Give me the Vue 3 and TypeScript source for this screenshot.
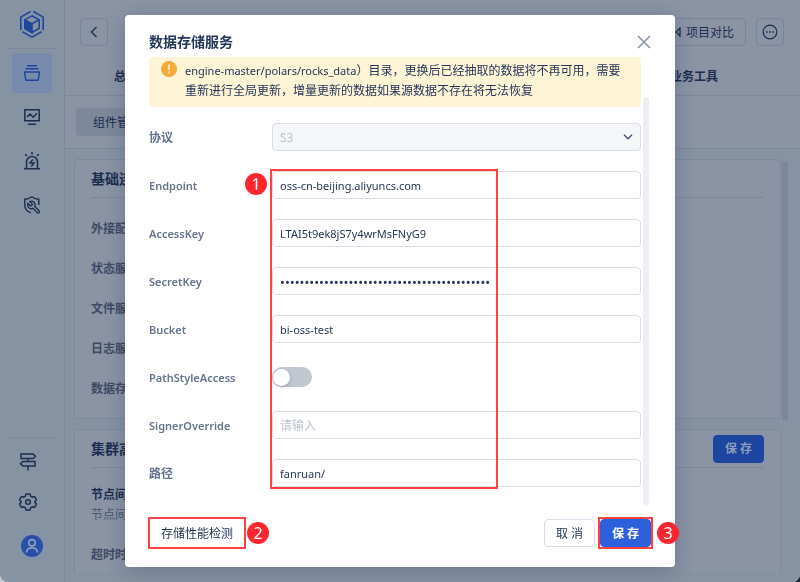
<script setup lang="ts">
import { ref } from 'vue'

interface Field {
  id: string
  label: string
  kind: 'text' | 'password' | 'switch'
  value: string
  cjk?: boolean
}

const protocol = ref('S3')
const pathStyle = ref(false)
const fields = ref<Field[]>([
  { id: 'endpoint', label: 'Endpoint', kind: 'text', value: 'oss-cn-beijing.aliyuncs.com' },
  { id: 'access-key', label: 'AccessKey', kind: 'text', value: 'LTAI5t9ek8jS7y4wrMsFNyG9' },
  { id: 'secret-key', label: 'SecretKey', kind: 'password', value: 'x'.repeat(43) },
  { id: 'bucket', label: 'Bucket', kind: 'text', value: 'bi-oss-test' },
  { id: 'path-style', label: 'PathStyleAccess', kind: 'switch', value: '' },
  { id: 'signer', label: 'SignerOverride', kind: 'text', value: '' },
  { id: 'path', label: '路径', kind: 'text', value: 'fanruan/', cjk: true },
])
const services: string[] = ['外接配置库', '状态服务器', '文件服务器', '日志服务器', '数据存储服务']
</script>

<template>
  <div class="shell">
    <nav class="sidebar">
      <a class="logo" href="#" aria-label="首页">
        <svg width="28" height="28" viewBox="0 0 28 28" fill="none" stroke="currentColor" stroke-width="1.6">
          <path d="M12.6 1.5 2.8 7.1v13.2M4.4 21.8l9.6 5.3 9.6-5.3M25.2 20.3V7.1l-9.8-5.6" />
          <path d="m14 5.8 7.2 4.1v8.4L14 22.5l-7.2-4.2V9.9z" />
          <path d="m6.8 9.9 7.2 3.9v8.7l-7.2-4.2z" fill="currentColor" />
          <path d="m14 13.8 7.2-3.9" />
        </svg>
      </a>
      <div class="nav-group">
        <a class="nav-item active" href="#" aria-label="项目">
          <svg width="16" height="16" viewBox="0 0 16 16" fill="none" stroke="currentColor" stroke-width="1.5">
            <path d="M3 .8h10M1.5 3.8h13M.8 7h14.4v2l-1 5.8a.6.6 0 0 1-.6.5H2.4a.6.6 0 0 1-.6-.5L.8 9z" />
          </svg>
        </a>
        <a class="nav-item" href="#" aria-label="监控">
          <svg width="16" height="16" viewBox="0 0 16 16" fill="none" stroke="currentColor" stroke-width="1.5">
            <path d="M.8.8h14.4v11H.8zM4 15.3h8M3 8l3-3 3.2 3.2L13 4.3" />
          </svg>
        </a>
        <a class="nav-item" href="#" aria-label="告警">
          <svg width="16" height="18" viewBox="0 0 16 18" fill="none" stroke="currentColor" stroke-width="1.5">
            <path d="M0 16.8h16M2.5 16.5V10a5.5 5.5 0 0 1 11 0v6.5M8 0v2.5M1.2 2.2l1.7 1.7M14.800 2.2l-1.7 1.7" />
            <path d="M8.800 7.500 6 11h4l-2.800 3.500" />
          </svg>
        </a>
        <a class="nav-item" href="#" aria-label="运维">
          <svg width="16" height="18" viewBox="0 0 16 18" fill="none" stroke="currentColor" stroke-width="1.4">
            <path d="M14.800 9V3.200C12 3.200 10 2.400 7.800.8 5.500 2.400 3.500 3.200.8 3.200v6.300c0 3.600 2.600 6 6 7.400" />
            <path d="M9.300 6.300a1 1 0 0 1 0 1.400L7.700 9.300a1 1 0 0 1-1.400 0L2.530 5.530a6 6 0 0 0 7.940 7.940l6.910 6.910a2.120 2.120 0 0 0 3-3l-6.910-6.910a6 6 0 0 0-7.940-7.940z" transform="translate(2.400 4) scale(.62)" stroke-width="2.100" />
          </svg>
        </a>
      </div>
      <div class="nav-bottom">
        <a class="tool" href="#" aria-label="指引">
          <svg width="18" height="18" viewBox="0 0 18 18" fill="none" stroke="currentColor" stroke-width="1.5">
            <path d="M2 1h12l2.500 2.300L14 5.600H2zM16 8.400H4L1.500 10.700 4 13h12zM9 5.600v2.800M9 13v4.500" />
          </svg>
        </a>
        <a class="tool" href="#" aria-label="设置">
          <svg width="18" height="18" viewBox="0 0 18 18" fill="none" stroke="currentColor" stroke-width="1.5" stroke-linejoin="round">
            <path d="M7 1h4l.7 2.300 1.500.9 2.400-.6 1.900 3.300L15.800 8.700v.6l1.700 1.800-1.900 3.300-2.400-.6-1.500.9L11 17H7l-.7-2.300-1.500-.9-2.400.6L.5 11.100 2.200 9.300v-.6L.5 6.900l1.900-3.300 2.400.6 1.500-.9z" />
            <circle cx="9" cy="9" r="2.300" />
          </svg>
        </a>
        <a class="avatar" href="#" aria-label="账户">
          <svg width="22" height="22" viewBox="0 0 22 22" fill="none" stroke="currentColor" stroke-width="1.6">
            <circle cx="11" cy="7.800" r="3.200" />
            <path d="M5.500 17.500c0-6.200 11-6.200 11 0" />
          </svg>
        </a>
      </div>
    </nav>

    <main class="main">
      <header class="topbar">
        <div class="topline">
          <button class="square" aria-label="返回">
            <svg width="8" height="12" viewBox="0 0 8 12" fill="none" stroke="currentColor" stroke-width="1.3"><path d="M6.500 1 1.500 6l5 5" /></svg>
          </button>
          <div class="actions">
            <button class="compare">
              <svg width="14" height="12" viewBox="0 0 14 12" fill="none" stroke="currentColor" stroke-width="1.3"><path d="m1 2 4 4-4 4zM13 2 9 6l4 4z" /></svg>
              <span>项目对比</span>
            </button>
            <button class="square" aria-label="更多">
              <svg width="16" height="16" viewBox="0 0 16 16" fill="none" stroke="currentColor" stroke-width="1.2">
                <circle cx="8" cy="8" r="6.800" /><path d="M4 8h1.600M7.200 8h1.600M10.400 8H12" stroke-width="1.600" />
              </svg>
            </button>
          </div>
        </div>
        <div class="tabs"><a href="#">总览</a><a href="#">业务工具</a></div>
      </header>
      <div class="subbar"><a class="pill" href="#">组件管理</a></div>
      <div class="content">
        <section class="card">
          <div class="card-head"><h2>基础连接</h2></div>
          <ul class="services"><li v-for="s in services" :key="s">{{ s }}</li></ul>
        </section>
        <section class="card cluster">
          <div class="card-head"><h2>集群高级配置</h2><button class="btn primary dim">保 存</button></div>
          <h3>节点间通信</h3>
          <p>节点间通信方式</p>
          <p class="timeout">超时时间</p>
        </section>
        <div class="page-scroll"></div>
      </div>
    </main>
  </div>

  <div class="mask">
    <form class="dialog" role="dialog" aria-labelledby="dialog-title" @submit.prevent>
      <div class="dialog-head">
        <h1 id="dialog-title">数据存储服务</h1>
        <button type="button" class="close" aria-label="关闭">
          <svg width="14" height="14" viewBox="0 0 14 14" fill="none" stroke="currentColor" stroke-width="1.5"><path d="m1 1 12 12M13 1 1 13" /></svg>
        </button>
      </div>
      <div class="dialog-body">
        <div class="form">
          <div class="notice">
            <svg width="16" height="16" viewBox="0 0 16 16"><circle cx="8" cy="8" r="8" fill="#f4ab3c" /><path d="M8 3.500v5.500M8 10.500v1.800" stroke="#fff4d6" stroke-width="1.600" /></svg>
            <p><span class="latin">engine-master/polars/rocks_data</span>）目录，更换后已经抽取的数据将不再可用，需要重新进行全局更新，增量更新的数据如果源数据不存在将无法恢复</p>
          </div>
          <div class="row">
            <label for="protocol" class="cjk">协议</label>
            <div class="select">
              <select id="protocol" v-model="protocol" disabled><option>S3</option></select>
              <svg width="10" height="6" viewBox="0 0 10 6" fill="none" stroke="currentColor" stroke-width="1.3"><path d="m1 .8 4 4 4-4" /></svg>
            </div>
          </div>
          <div class="marked">
            <div v-for="f in fields" :key="f.id" class="row">
              <label :for="f.id" :class="{ cjk: f.cjk }">{{ f.label }}</label>
              <input v-if="f.kind === 'switch'" :id="f.id" v-model="pathStyle" type="checkbox" class="switch" />
              <input v-else :id="f.id" v-model="f.value" :type="f.kind" class="field" placeholder="请输入" autocomplete="off" />
            </div>
            <div class="frame fields-frame"></div>
            <span class="step step-1">1</span>
          </div>
        </div>
        <div class="scrollbar"></div>
      </div>
      <div class="dialog-foot">
        <div class="anchor">
          <button type="button" class="btn text">存储性能检测</button>
          <div class="frame test-frame"></div>
          <span class="step step-2">2</span>
        </div>
        <div class="confirm">
          <button type="button" class="btn">取 消</button>
          <div class="anchor">
            <button type="submit" class="btn primary">保 存</button>
            <div class="frame save-frame"></div>
            <span class="step step-3">3</span>
          </div>
        </div>
      </div>
    </form>
  </div>
</template>

<style>
body {
  background: linear-gradient(90deg, #c9ccd1 50%, #1d2733 50%);
}
</style>

<style scoped>
* {
  box-sizing: border-box;
}
.shell,
.mask,
button,
input,
select {
  font-family: 'Noto Sans', 'Noto Sans CJK SC', sans-serif;
  font-size: 12px;
  line-height: 20px;
}
h1, h2, h3, p, ul {
  margin: 0;
  padding: 0;
}
a {
  color: inherit;
  text-decoration: none;
}
svg {
  display: block;
  flex: none;
}
button {
  cursor: pointer;
}
.shell {
  display: flex;
  height: 100vh;
  overflow: hidden;
  border-radius: 0 0 8px 8px;
  background: #8693a3;
  color: #1c2e50;
}
.sidebar {
  display: flex;
  flex: none;
  flex-direction: column;
  width: 65px;
  border-right: 1px solid #7b889d;
  padding: 0 8px;
}
.logo {
  display: flex;
  justify-content: center;
  height: 49px;
  padding-top: 10px;
  border-bottom: 1px solid #7b889a;
  color: #1f469d;
}
.nav-group {
  display: flex;
  flex-direction: column;
  align-items: center;
  gap: 4px;
  padding-top: 4px;
}
.nav-item {
  display: grid;
  place-items: center;
  width: 40px;
  height: 40px;
  border-radius: 4px;
}
.nav-item.active {
  background: #788bac;
  color: #1f469d;
}
.nav-bottom {
  display: flex;
  flex-direction: column;
  gap: 22px;
  margin-top: auto;
  padding: 15px 11px 25px;
  border-top: 1px solid #7b889a;
}
.avatar {
  width: 22px;
  height: 22px;
  margin: 2px 0 0 2px;
  border-radius: 50%;
  background: #2850a9;
  color: #8d9dbd;
}
.main {
  display: flex;
  flex: 1;
  flex-direction: column;
  min-width: 0;
  background: #8b94a5;
}
.topbar {
  flex: none;
  border-bottom: 1px solid #7b889a;
}
.topline {
  display: flex;
  justify-content: space-between;
  padding: 18px 16px 0 15px;
}
.actions {
  display: flex;
  gap: 10px;
}
.square,
.compare {
  display: flex;
  align-items: center;
  justify-content: center;
  gap: 5px;
  height: 28px;
  border: 1px solid #78869a;
  border-radius: 4px;
  background: none;
  color: #1c2e50;
}
.square {
  width: 28px;
  padding: 0;
}
.compare {
  padding: 0 11px;
}
.compare span {
  padding-top: 2px;
}
.tabs {
  display: flex;
  justify-content: space-between;
  padding: 21px 82px 8px 49px;
  font-weight: 700;
}
.subbar {
  display: flex;
  flex: none;
  padding: 12px 11px;
  border-bottom: 1px solid #7b889a;
}
.pill {
  padding: 5px 17px 3px;
  border-radius: 4px;
  background: #7d899b;
}
.content {
  position: relative;
  display: flex;
  flex: 1;
  flex-direction: column;
  gap: 10px;
  min-height: 0;
  margin-bottom: 10px;
  padding: 10px 19px 0 9px;
  overflow: hidden;
  background: #8693a3;
  box-shadow: 0 10px #8693a3;
}
.card {
  flex: none;
  padding: 0 16px;
  border: 1px solid #7c899c;
  border-radius: 4px;
  background: #8b94a5;
}
.card-head {
  display: flex;
  align-items: center;
  justify-content: space-between;
  height: 38px;
  border-bottom: 1px solid #7b889a;
}
h2 {
  font-size: 14px;
  font-weight: 700;
}
.services {
  display: flex;
  flex-direction: column;
  gap: 20px;
  padding: 21px 0 19px;
  list-style: none;
  color: #3d4b65;
  font-weight: 700;
}
h3 {
  padding-top: 17px;
  font-size: 12px;
  font-weight: 700;
}
.cluster p {
  color: #4a576e;
}
.cluster .timeout {
  padding: 20px 0;
  color: #3d4b65;
  font-weight: 700;
}
.page-scroll {
  position: absolute;
  top: 12px;
  right: 12px;
  width: 6px;
  height: 260px;
  border-radius: 3px;
  background: #7b879b;
}
.mask {
  position: fixed;
  inset: 0;
  display: flex;
  align-items: center;
  justify-content: center;
  color: #24375a;
}
.dialog {
  width: 550px;
  max-width: 100%;
  padding: 17px 24px 20px;
  border-radius: 4px;
  background: #fff;
  box-shadow: 0 4px 20px rgba(20, 35, 60, 0.25);
}
.dialog-head {
  display: flex;
  align-items: center;
  justify-content: space-between;
  height: 20px;
  margin-bottom: 5px;
}
h1 {
  font-size: 14px;
  font-weight: 700;
}
.close {
  padding: 0;
  border: 0;
  background: none;
  color: #8390a6;
}
.dialog-body {
  display: flex;
  gap: 2px;
}
.form {
  flex: 1;
  min-width: 0;
}
.scrollbar {
  width: 6px;
  margin: 40px 2px 0 0;
  border-radius: 3px;
  background: #edeef3;
}
.notice {
  display: flex;
  gap: 8px;
  margin-bottom: 16px;
  padding: 4px 12px 6px;
  border-radius: 0 0 4px 4px;
  background: #fff4d6;
}
.latin {
  font-size: 11px;
}
.row {
  display: flex;
  align-items: center;
  height: 28px;
  margin-bottom: 20px;
}
.row label {
  flex: none;
  width: 123px;
  padding-top: 2px;
  color: #65738d;
  font-size: 11px;
  font-weight: 600;
}
.row .cjk {
  font-size: 12px;
}
.field,
.select select {
  width: 100%;
  min-width: 0;
  height: 28px;
  padding: 1px 7px 0;
  border: 1px solid #d8dde7;
  border-radius: 4px;
  background: #fff;
  color: #24375a;
  outline: none;
}
.field {
  font-size: 11px;
}
.field[type='password'] {
  font-size: 13px;
}
.field::placeholder {
  color: #bdc4d0;
  font-size: 12px;
  opacity: 1;
}
.select {
  position: relative;
  flex: 1;
}
.select select {
  display: block;
  appearance: none;
  background: #f4f6f8;
  color: #bdc4d0;
  opacity: 1;
}
.select svg {
  position: absolute;
  top: 11px;
  right: 8px;
  color: #405070;
}
.switch {
  display: flex;
  align-items: center;
  width: 40px;
  height: 20px;
  margin: 0;
  padding: 0 1px;
  appearance: none;
  border-radius: 10px;
  background: #c1c7d0;
}
.switch::before {
  width: 17px;
  height: 17px;
  border-radius: 50%;
  background: #fff;
  box-shadow: 0 1px 3px rgba(30, 45, 70, 0.3);
  content: '';
}
.switch:checked {
  justify-content: flex-end;
  background: #2c60dc;
}
.marked,
.anchor {
  position: relative;
}
.marked .row:nth-child(7) {
  margin-bottom: 18px;
}
.dialog-foot {
  display: flex;
  align-items: center;
  justify-content: space-between;
  padding-top: 14px;
}
.confirm {
  display: flex;
  gap: 5px;
}
.btn {
  display: block;
  width: 51px;
  height: 28px;
  padding: 1px 0 0;
  border: 1px solid #d8dde7;
  border-radius: 4px;
  background: #fff;
  color: #24375a;
}
.btn.text {
  width: auto;
  padding: 1px 11px 0;
  border-color: transparent;
}
.btn.primary {
  border-color: #2c60dc;
  background: #2c60dc;
  color: #fff;
  font-weight: 700;
}
.btn.dim {
  border-color: #1c459f;
  background: #1c459f;
  color: #8d9dbd;
}
.frame {
  position: absolute;
  border: 2px solid #ff4040;
  pointer-events: none;
}
.fields-frame {
  top: -2px;
  bottom: -2px;
  left: 121px;
  width: 228px;
}
.test-frame {
  inset: -2px -1px;
}
.save-frame {
  inset: -2px;
}
.step {
  position: absolute;
  width: 22px;
  height: 22px;
  border-radius: 50%;
  background: #ff262e;
  color: #fff;
  font-size: 16px;
  line-height: 22px;
  text-align: center;
}
.step-1 {
  top: 2px;
  left: 96px;
}
.step-2,
.step-3 {
  top: 3px;
  left: 100%;
}
.step-2 {
  margin-left: 2px;
}
.step-3 {
  margin-left: 6px;
}
</style>
